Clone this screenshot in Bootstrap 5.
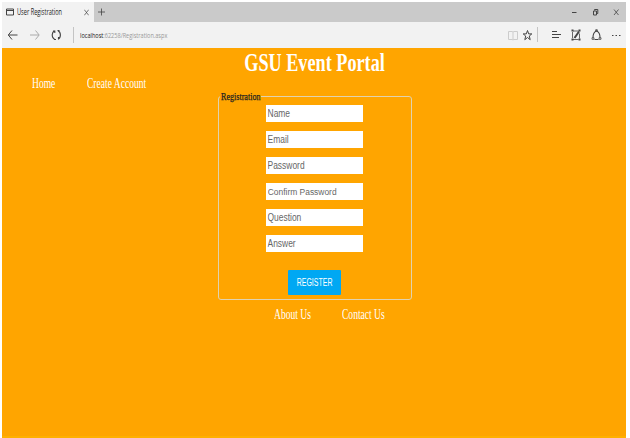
<!DOCTYPE html>
<html lang="en">
<head>
<meta charset="utf-8">
<meta name="viewport" content="width=device-width, initial-scale=1">
<title>User Registration</title>
<link href="https://cdn.jsdelivr.net/npm/bootstrap@5.3.0/dist/css/bootstrap.min.css" rel="stylesheet">
<style>
body{background:#fff;overflow:hidden;font-family:"Liberation Serif",serif;line-height:1}
.browser{width:624px;height:436px;margin:2px 0 0 2px}
.strip{height:20px;background:#cacaca}
.tab-on{width:92px;height:20px;background:#f2f2f2}
.tab-icon{margin-left:4px}
.win-icons{margin-right:5px}
.bar{height:26px;background:#f2f2f2}
svg{display:block;flex:none;fill:none;stroke:#444;stroke-width:1}
.sq{display:inline-block;white-space:nowrap;transform:scaleX(.735);transform-origin:0 50%}
.ui{font-family:"Open Sans",sans-serif;font-size:8.5px;color:#222;line-height:12px}
.tab-text{width:67px;margin-left:3px}
.tab-text .sq{transform:scaleX(.66)}
.url{width:400px;margin-left:5px}
.url .sq{transform:scaleX(.695);color:#999;font-size:8px}
.url b{font-weight:400;color:#222}
.portal{background:#ffa500;border-bottom:2px solid #ffb000;color:#fff}
.title{font-size:25px;font-weight:700;line-height:30px;height:30px;margin:0;padding-left:2px}
.title .sq{transform:scaleX(.728)}
.title .sq,.btn .sq{transform-origin:50% 50%}
.links{font-size:13.6px;line-height:15px}
.links .sq{transform:scaleX(.703)}
.links a{color:#fff;text-decoration:none;display:block;height:15px}
.top-links{padding-left:30px;margin-top:-2px;height:20px}
.top-links a:first-child{width:55px}
.foot-links{margin:7px 0 0 272px}
.foot-links a:first-child{width:68px}
.reg{width:194px;height:204px;margin-left:216px;border:1px solid #e0d2b0;border-radius:3px}
.reg-name{font-size:11px;line-height:9px;height:8px;width:41px;background:#ffa500;color:#222;margin:-5px 0 5px 1px;padding-left:1px;-webkit-text-stroke:.25px #222}
.fields{gap:9px;margin-left:47px;width:97px}
.field{height:17px;background:#fff;overflow:hidden}
.field input{display:block;height:17px;width:126px;border:0;border-radius:0;padding:0 2px;background:#fff;font:11px/17px "Liberation Sans",sans-serif;transform:scaleX(.767);transform-origin:0 0}
.field input::placeholder{color:#666;opacity:1}
.field input.low{font-size:9.7px;width:112px;transform:scaleX(.87)}
.btn-reg{--bs-btn-padding-x:0;--bs-btn-padding-y:0;width:53px;height:25px;margin:18px 0 0 69px;background:#00a8f3;color:#fff;border:0;border-radius:1px;font:10px/25px "Liberation Sans",sans-serif}
.btn-reg .sq{transform:scaleX(.7)}
</style>
<script src="https://cdn.jsdelivr.net/npm/bootstrap@5.3.0/dist/js/bootstrap.bundle.min.js"></script>
</head>
<body>
<div class="browser d-flex flex-column">
  <header>
    <div class="strip d-flex align-items-center">
      <div class="tab-on d-flex align-items-center">
        <svg class="tab-icon" width="8" height="8" viewBox="0 0 8 8"><path d="M.5 1h7v6h-7zM.5 2.5h7"/></svg>
        <div class="tab-text ui"><span class="sq">User Registration</span></div>
        <svg width="5" height="7" viewBox="0 0 5 7"><path d="M.3 .7l4.400 5.600M4.700 .7L.3 6.300" stroke-width=".7"/></svg>
      </div>
      <svg width="7" height="8" viewBox="0 0 7 8" class="ms-1"><path d="M3.5 .5v7M0 4h7" stroke-width=".8"/></svg>
      <svg width="50" height="10" viewBox="0 0 50 10" class="win-icons ms-auto"><path d="M1 5.500h4.500"/><path d="M22.500 4h3v4h-3zM23.500 3.500v-1h3.300v4h-1"/><path d="M43 2.500l4.500 5.500M47.500 2.500L43 8" stroke-width=".8"/></svg>
    </div>
    <div class="bar d-flex align-items-center">
      <svg width="73" height="20" viewBox="0 0 73 20"><path d="M6.500 10h9M10 5.500L6.300 10l3.700 4.500"/><path d="M28 10h9M33.500 5.500l3.700 4.500-3.700 4.500" stroke="#aaa"/><path d="M52.700 5.700C49.500 7.200 49.300 12.500 52.500 14.200M56 5.700c3.200 1.500 3.200 7 0 8.500M52 14.500h2M55.500 5.500h2M51 6h1.800v2M56.500 14v-2" stroke-width="1.100"/><path d="M71.500 2v16" stroke="#c4c4c4"/></svg>
      <div class="url ui"><span class="sq"><b>localhost</b>:62258/Registration.aspx</span></div>
      <svg width="119" height="20" viewBox="507 25 119 20" class="ms-auto">
        <path d="M508.500 31.500h4l.5.700.5-.700h4v8h-4l-.5.700-.5-.700h-4zM513 32v8" stroke="#ccc"/>
        <path d="M527.500 30.500l1.200 3.400h3.100l-2.500 2.100.9 3.700-2.700-2.200-2.700 2.200.9-3.700-2.500-2.100h3.100z"/>
        <path d="M537.500 27v15" stroke="#c4c4c4"/>
        <path d="M552 31.500h5M552 34.500h9M552 37.500h7"/>
        <path d="M573 31h5.500M579.500 33.500v5M573 39.500h5.500M572.500 32v6" stroke-width=".8"/>
        <path d="M574.500 38l4.500-6.500" stroke-width="2"/>
        <path d="M571.500 30.500h2M571.500 39.500h2M578.500 39.500h2M578.500 30.500h2" stroke-width="1.800"/>
        <path d="M593 37.500c0-3 .8-5.500 3.500-6.800 2.700 1.300 3.500 3.800 3.500 6.800M594.500 39.500h4" stroke-width="1.100"/>
        <path d="M592 37.700h2v1.600h-2zM599 37.700h2v1.600h-2zM595.700 29.700h1.600v1.600h-1.600z" stroke-width=".8"/>
        <path d="M612 35.500h1.500M615.500 35.500h1.500M619 35.500h1.500"/>
      </svg>
    </div>
  </header>
  <main class="portal flex-grow-1">
    <h1 class="title text-center"><span class="sq">GSU Event Portal</span></h1>
    <nav class="links top-links d-flex"><a href="#"><span class="sq">Home</span></a><a href="#"><span class="sq">Create Account</span></a></nav>
    <form class="reg">
      <div class="reg-name"><span class="sq">Registration</span></div>
      <div class="fields d-flex flex-column">
        <div class="field"><input type="text" placeholder="Name"></div>
        <div class="field"><input type="email" placeholder="Email"></div>
        <div class="field"><input type="password" placeholder="Password"></div>
        <div class="field"><input type="password" class="low" placeholder="Confirm Password"></div>
        <div class="field"><input type="text" placeholder="Question"></div>
        <div class="field"><input type="text" placeholder="Answer"></div>
      </div>
      <button type="button" class="btn btn-reg d-flex justify-content-center"><span class="sq">REGISTER</span></button>
    </form>
    <nav class="links foot-links d-flex"><a href="#"><span class="sq">About Us</span></a><a href="#"><span class="sq">Contact Us</span></a></nav>
  </main>
</div>
</body>
</html>
